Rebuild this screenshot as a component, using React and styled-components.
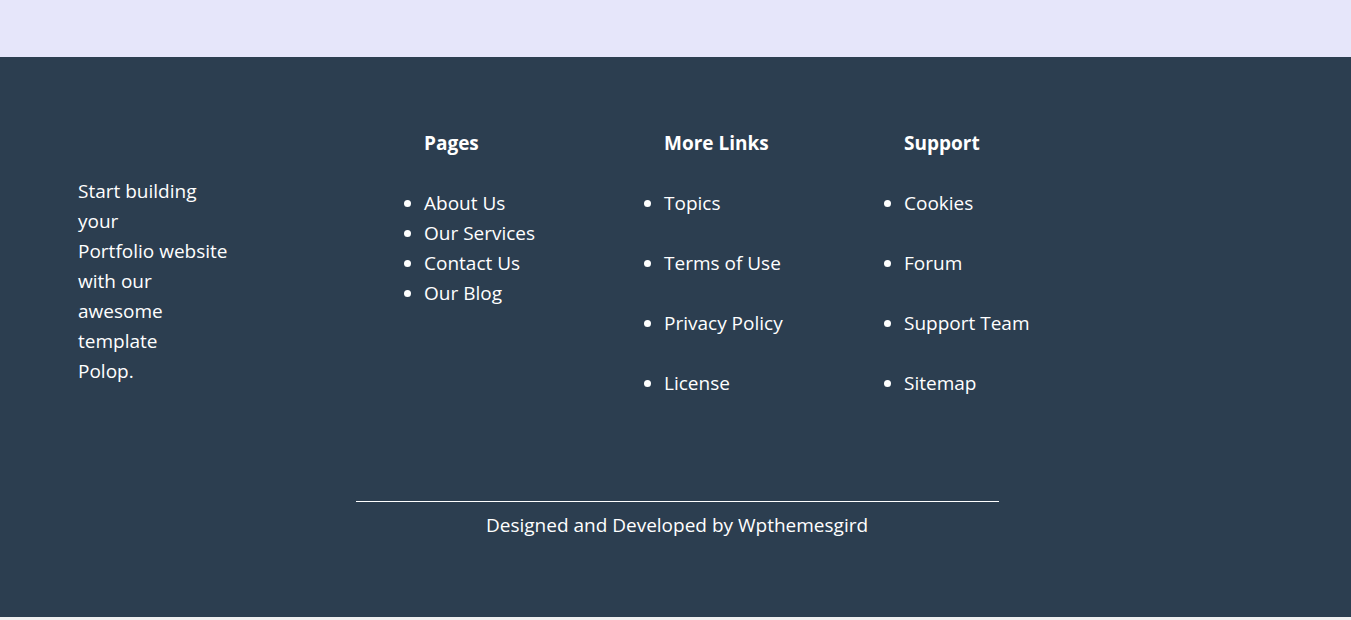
import React from 'react';
import styled, { createGlobalStyle } from 'styled-components';

const GlobalStyle = createGlobalStyle`
  html {
    overflow: scroll;
    background: #f0f0f0;
  }
  html::-webkit-scrollbar {
    width: 4px;
    height: 3px;
  }
  html::-webkit-scrollbar-track {
    background: #f1f1f1;
  }
  html::-webkit-scrollbar-corner {
    background: #f1f1f1;
  }
  body {
    margin: 0;
    font-family: "Open Sans", "Noto Sans", sans-serif;
  }
`;

const TopBand = styled.section`
  height: 57px;
  background: #e6e6fa;
`;

const Footer = styled.footer`
  height: 560px;
  box-sizing: border-box;
  padding-top: 71px;
  background: #2c3e50;
  color: #ffffff;
  display: flex;
  flex-direction: column;
  font-size: 19px;
  line-height: 30px;
`;

const Columns = styled.div`
  display: grid;
  grid-template-columns: 306px 240px 240px 240px;
  padding-left: 78px;
  align-items: start;
`;

const About = styled.p`
  margin: 48px 0 0;
  width: 152px;
`;

const Column = styled.div`
  display: flex;
  flex-direction: column;
`;

const Heading = styled.h3`
  margin: 0;
  padding-left: 40px;
  font-size: 19px;
  line-height: 30px;
  font-weight: 700;
`;

const LinkList = styled.ul`
  margin: 30px 0 0;
  padding-left: 40px;
  list-style: disc;
  display: flex;
  flex-direction: column;
  gap: ${(p) => p.$gap}px;
`;

const LinkItem = styled.li`
  line-height: 30px;
`;

const Bottom = styled.div`
  margin-top: 103px;
  padding-left: 3px;
  display: flex;
  flex-direction: column;
  align-items: center;
`;

const Rule = styled.hr`
  width: 643px;
  margin: 0;
  border: 0;
  border-top: 1px solid #ffffff;
`;

const Credit = styled.p`
  margin: 8px 0 0;
`;

const columns = [
  { title: 'Pages', gap: 0, links: ['About Us', 'Our Services', 'Contact Us', 'Our Blog'] },
  { title: 'More Links', gap: 30, links: ['Topics', 'Terms of Use', 'Privacy Policy', 'License'] },
  { title: 'Support', gap: 30, links: ['Cookies', 'Forum', 'Support Team', 'Sitemap'] },
];

export default function App() {
  return (
    <>
      <GlobalStyle />
      <TopBand />
      <Footer>
        <Columns>
          <About>
            Start building your
            <br />
            Portfolio website with our awesome template
            <br />
            Polop.
          </About>
          {columns.map((col) => (
            <Column key={col.title}>
              <Heading>{col.title}</Heading>
              <LinkList $gap={col.gap}>
                {col.links.map((l) => (
                  <LinkItem key={l}>{l}</LinkItem>
                ))}
              </LinkList>
            </Column>
          ))}
        </Columns>
        <Bottom>
          <Rule />
          <Credit>Designed and Developed by Wpthemesgird</Credit>
        </Bottom>
      </Footer>
    </>
  );
}
